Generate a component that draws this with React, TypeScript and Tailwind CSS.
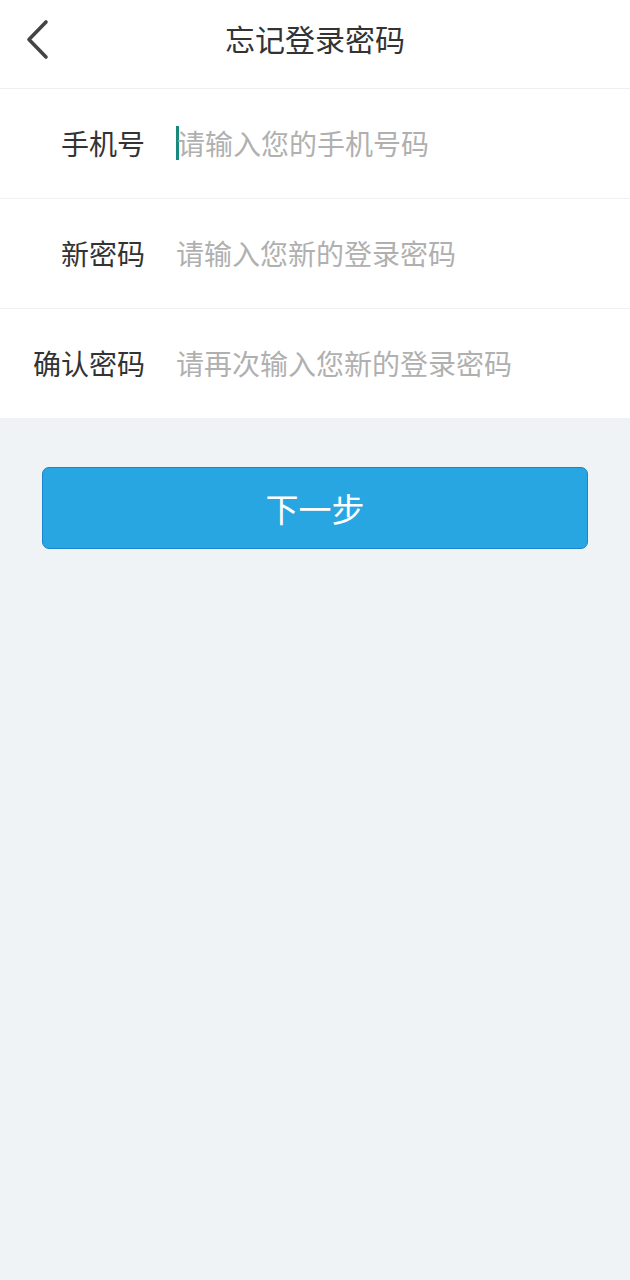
import React from "react";

const font = { fontFamily: '"Noto Sans CJK SC", "Noto Sans", sans-serif' };

type Field = { label: string; placeholder: string; focused?: boolean };

const fields: Field[] = [
  { label: "手机号", placeholder: "请输入您的手机号码", focused: true },
  { label: "新密码", placeholder: "请输入您新的登录密码" },
  { label: "确认密码", placeholder: "请再次输入您新的登录密码" },
];

function BackIcon() {
  return (
    <svg width="30" height="44" viewBox="0 0 30 44" fill="none">
      <path
        d="M22 4 L5 21.5 L22 39"
        stroke="#444444"
        strokeWidth="3.6"
        strokeLinecap="round"
        strokeLinejoin="round"
      />
    </svg>
  );
}

export default function App() {
  return (
    <div className="flex min-h-[1280px] w-[630px] flex-col bg-[#eff3f6]" style={font}>
      <header className="relative flex h-[88px] items-center justify-center bg-white">
        <button type="button" className="absolute left-[24px] top-[18px]" aria-label="返回">
          <BackIcon />
        </button>
        <h1 className="-mt-[12px] text-[30px] leading-none text-[#333333]">忘记登录密码</h1>
      </header>

      <div className="flex flex-col gap-[1px] border-t border-[#eeeeee] bg-[#f0f0f0]">
        {fields.map((field) => (
          <div key={field.label} className="flex h-[109px] items-center bg-white">
            <span className="-mt-[2px] w-[145px] shrink-0 text-right text-[28px] leading-none text-[#333333]">
              {field.label}
            </span>
            <div className="-mt-[2px] ml-[31px] flex items-center">
              {field.focused ? (
                <span className="mr-[1px] h-[34px] w-[3px] bg-[#188a7c]" />
              ) : null}
              <span
                className={`text-[28px] leading-none text-[#b0b0b0] ${field.focused ? "-ml-[3px]" : ""}`}
              >
                {field.placeholder}
              </span>
            </div>
          </div>
        ))}
      </div>

      <div className="px-[42px] pt-[49px]">
        <button
          type="button"
          className="flex h-[82px] w-full items-center justify-center rounded-[7px] border border-[#1d82cf] bg-[#28a6e1] text-[33px] leading-none text-white"
        >
          下一步
        </button>
      </div>
    </div>
  );
}
